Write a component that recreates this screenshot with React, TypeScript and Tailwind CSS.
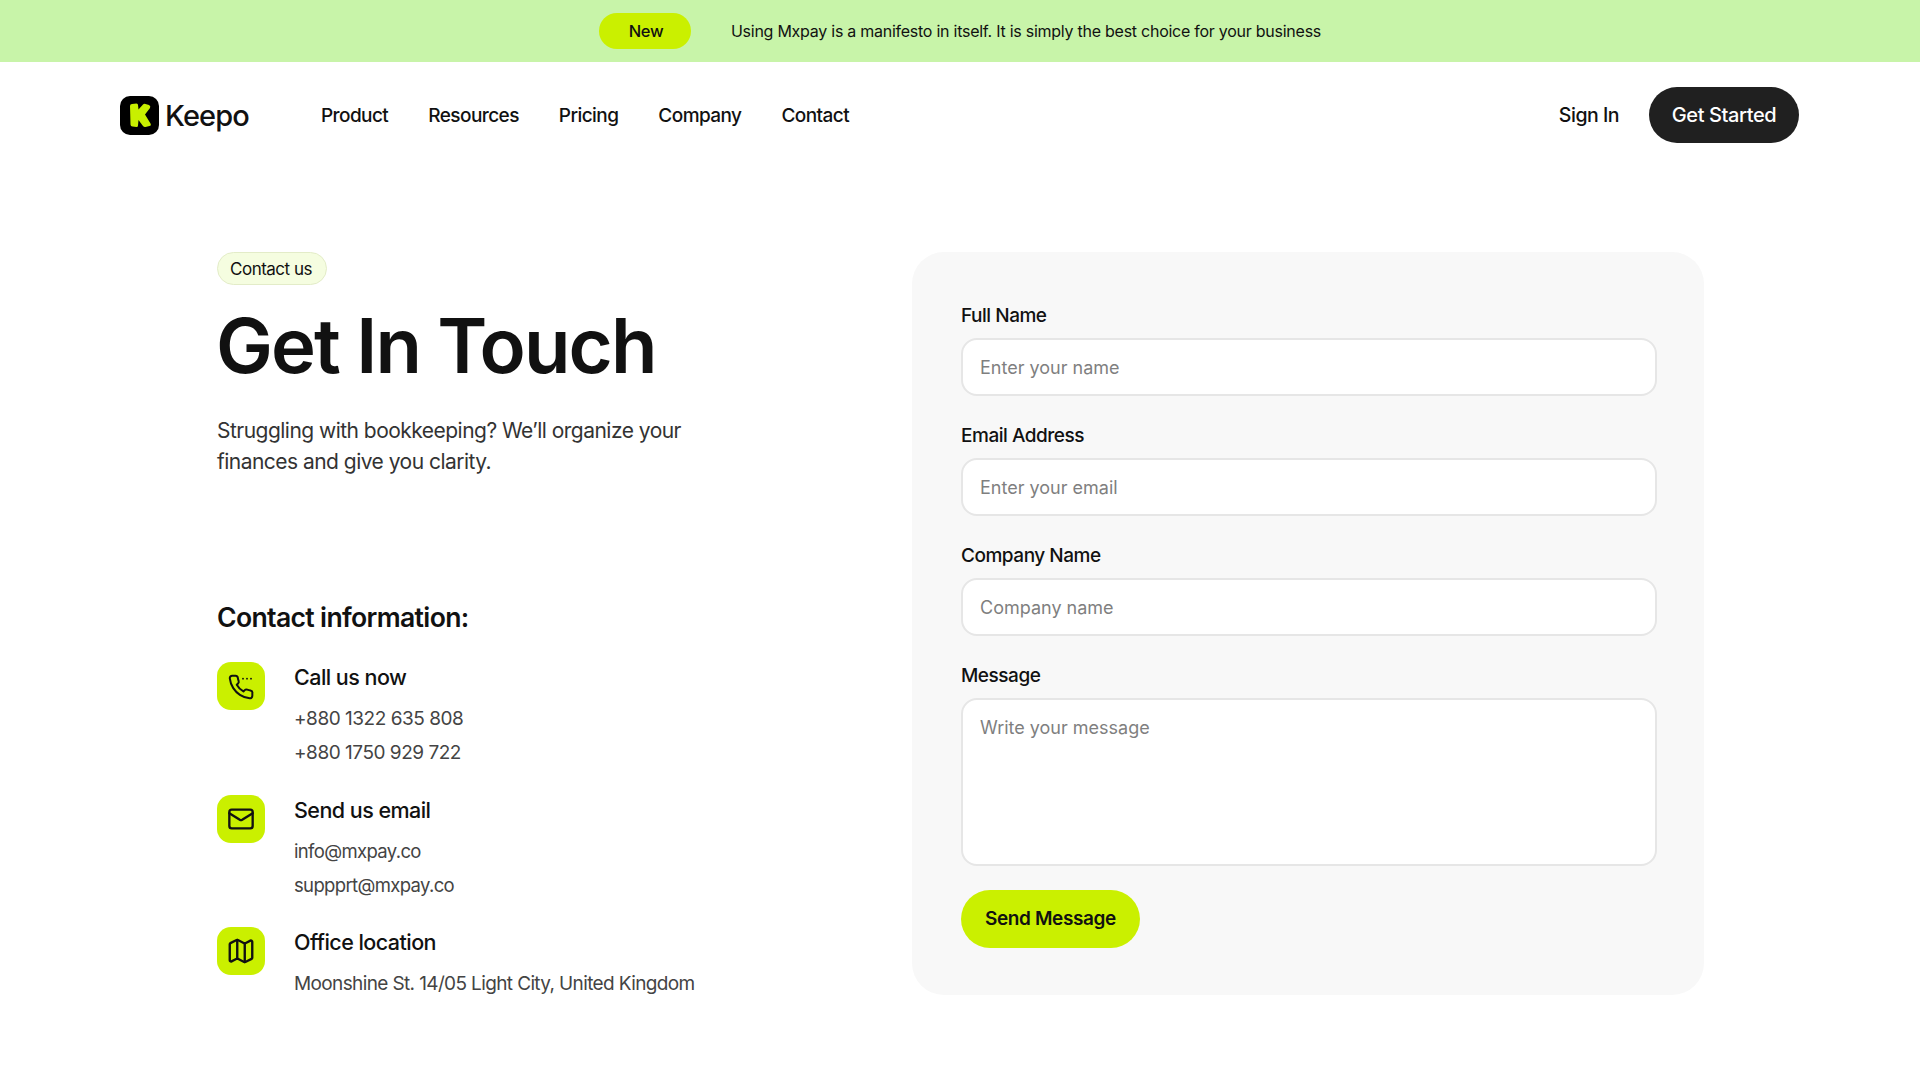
import React from 'react'
import { Mail, Map } from 'lucide-react'

const navLinks = ['Product', 'Resources', 'Pricing', 'Company', 'Contact']

const LogoMark = () => (
  <svg viewBox="0 0 39 39" className="h-[39px] w-[39px]">
    <rect width="39" height="39" rx="10" fill="#000" />
    <path
      d="M10 10 Q10 8 12 8 L16.5 7.5 Q18 7.5 18 9 L18.5 13.5 L23 8.5 Q24 7.5 25.5 8 L29 9 Q31 10 30 12 L25 18.5 L30.5 27.5 Q31.5 29.5 29.5 30 L25.5 31 Q24 31.3 23 30 L18.5 24 L18 29.5 Q18 31 16.5 31 L12.5 30.5 Q10.5 30.3 10.5 28.5 Z"
      fill="#c8f000"
    />
  </svg>
)

const PhoneDots = () => (
  <svg viewBox="0 0 24 24" className="h-8 w-8" fill="none" stroke="#111" strokeWidth="1.5" strokeLinecap="round" strokeLinejoin="round">
    <path d="M20.5 17v2.4a1.8 1.8 0 0 1-2 1.8 16.6 16.6 0 0 1-7.3-2.6 16.3 16.3 0 0 1-5-5 16.6 16.6 0 0 1-2.6-7.3 1.8 1.8 0 0 1 1.8-2h2.4a1.8 1.8 0 0 1 1.8 1.5c.1.8.3 1.6.6 2.4a1.8 1.8 0 0 1-.4 1.9l-1 1a13 13 0 0 0 5 5l1-1a1.8 1.8 0 0 1 1.9-.4c.8.3 1.6.5 2.4.6a1.8 1.8 0 0 1 1.5 1.7Z" />
    <path d="M13.5 6.5h.01M16.5 6.5h.01M19.5 6.5h.01" strokeWidth="1.4" />
  </svg>
)

const contacts = [
  {
    icon: <PhoneDots />,
    title: 'Call us now',
    lines: ['+880 1322 635 808', '+880 1750 929 722'],
    lineClass: 'text-[19px] tracking-[-0.025em]',
  },
  {
    icon: <Mail className="h-7 w-7 text-[#111]" strokeWidth={2} />,
    title: 'Send us email',
    lines: ['info@mxpay.co', 'suppprt@mxpay.co'],
    lineClass: 'text-[18.5px] tracking-[-0.035em]',
  },
  {
    icon: <Map className="h-[30px] w-[30px] text-[#111]" strokeWidth={1.9} />,
    title: 'Office location',
    lines: ['Moonshine St. 14/05 Light City, United Kingdom'],
    lineClass: 'text-[19px] tracking-[-0.033em]',
  },
]

const fields = [
  { label: 'Full Name', placeholder: 'Enter your name' },
  { label: 'Email Address', placeholder: 'Enter your email' },
  { label: 'Company Name', placeholder: 'Company name' },
]

const inputClass =
  'w-full rounded-2xl border-2 border-[#e6e6e6] bg-white px-[17px] text-[18px] tracking-normal text-[#111] placeholder:text-[#7f7f7f] outline-none'

export default function App() {
  return (
    <div className="min-h-screen bg-white font-['Inter',sans-serif] text-[#111]">
      {/* Banner */}
      <div className="flex h-[62px] items-center justify-center gap-10 bg-[#c8f4a9]">
        <span className="flex h-9 w-[92px] items-center justify-center rounded-full bg-[#caf000] pl-[2px] text-[16.5px] font-medium tracking-[-0.02em]">
          New
        </span>
        <p className="text-[16px] tracking-[-0.016em] text-[#111]">
          Using Mxpay is a manifesto in itself. It is simply the best choice for your business
        </p>
      </div>

      {/* Nav */}
      <nav className="flex items-center justify-between pl-[120px] pr-[121px] pt-[25px]">
        <div className="flex items-center">
          <div className="flex items-center gap-[6px]">
            <LogoMark />
            <span className="pt-px text-[29px] font-medium tracking-[-0.03em]">Keepo</span>
          </div>
          <div className="ml-[72px] flex items-center gap-10 pt-[2px] text-[19px] font-medium tracking-[-0.03em]">
            {navLinks.map((link) => (
              <a key={link}>{link}</a>
            ))}
          </div>
        </div>
        <div className="flex items-center gap-[30px]">
          <a className="pt-[2px] text-[19.5px] font-medium tracking-[-0.025em]">Sign In</a>
          <button className="flex h-14 w-[150px] items-center justify-center rounded-full bg-[#202020] text-[20px] font-medium tracking-[-0.02em] text-white">
            Get Started
          </button>
        </div>
      </nav>

      {/* Main */}
      <main className="mt-[109px] flex justify-between pl-[217px] pr-[216px]">
        <div className="w-[560px]">
          <span className="inline-flex h-[33px] w-[110px] items-center justify-center rounded-full border border-[#e3ecc8] bg-[#f5fde0] pr-[2px] pt-[2px] text-[17px] tracking-[-0.03em]">
            Contact us
          </span>
          <h1 className="mt-[18px] -ml-px text-[76px] font-semibold leading-[84px] tracking-[-0.025em]">Get In Touch</h1>
          <p className="mt-[28px] w-[500px] text-[21px] leading-[31px] tracking-[-0.025em] text-[#333]">
            Struggling with bookkeeping? We’ll organize your finances and give you clarity.
          </p>

          <h2 className="mt-[123px] text-[26.6px] font-semibold leading-[34px] tracking-[-0.025em]">Contact information:</h2>
          <div className="mt-[28px] flex flex-col gap-[25px]">
            {contacts.map((item) => (
              <div key={item.title} className="flex gap-[29px]">
                <div className="flex h-12 w-12 shrink-0 items-center justify-center rounded-[14px] bg-[#caf000]">
                  {item.icon}
                </div>
                <div>
                  <h3 className="text-[21.5px] font-medium leading-[30px] tracking-[-0.025em]">{item.title}</h3>
                  <div className={`mt-[9.5px] flex flex-col leading-[34px] text-[#444] ${item.lineClass}`}>
                    {item.lines.map((line) => (
                      <span key={line}>{line}</span>
                    ))}
                  </div>
                </div>
              </div>
            ))}
          </div>
        </div>

        {/* Form */}
        <form className="flex h-[743px] w-[792px] flex-col rounded-[32px] bg-[#f8f8f8] pl-[49px] pr-[47px] pt-[49px]">
          {fields.map((field) => (
            <div key={field.label} className="mb-[25px]">
              <label className="mb-[7px] block text-[19px] font-medium leading-[30px] tracking-[-0.025em]">{field.label}</label>
              <input className={`${inputClass} h-[58px]`} placeholder={field.placeholder} />
            </div>
          ))}
          <div>
            <label className="mb-[7px] block text-[19px] font-medium leading-[30px] tracking-[-0.025em]">Message</label>
            <textarea className={`${inputClass} block h-[168px] resize-none py-[14px]`} placeholder="Write your message" />
          </div>
          <button
            type="button"
            className="mt-6 flex h-[58px] w-[179px] items-center justify-center rounded-full bg-[#caf000] pt-px text-[19px] font-semibold tracking-[-0.02em]"
          >
            Send Message
          </button>
        </form>
      </main>
    </div>
  )
}
